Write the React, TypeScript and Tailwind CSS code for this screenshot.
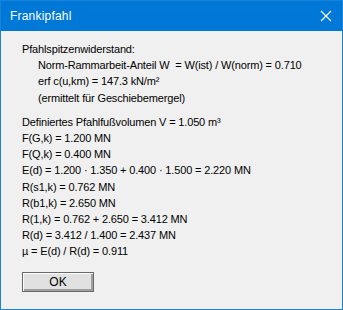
import React from 'react';

const lines: { text: string; indent?: boolean; gap?: boolean }[] = [
  { text: 'Pfahlspitzenwiderstand:' },
  { text: 'Norm-Rammarbeit-Anteil W\u00a0 = W(ist) / W(norm) = 0.710', indent: true },
  { text: 'erf c(u,km) = 147.3 kN/m²', indent: true },
  { text: '(ermittelt für Geschiebemergel)', indent: true },
  { text: 'Definiertes Pfahlfußvolumen V = 1.050 m³', gap: true },
  { text: 'F(G,k) = 1.200 MN' },
  { text: 'F(Q,k) = 0.400 MN' },
  { text: 'E(d) = 1.200 · 1.350 + 0.400 · 1.500 = 2.220 MN' },
  { text: 'R(s1,k) = 0.762 MN' },
  { text: 'R(b1,k) = 2.650 MN' },
  { text: 'R(1,k) = 0.762 + 2.650 = 3.412 MN' },
  { text: 'R(d) = 3.412 / 1.400 = 2.437 MN' },
  { text: 'µ = E(d) / R(d) = 0.911' },
];

export default function App() {
  return (
    <div className="w-[343px] h-[310px] flex flex-col border border-[#1883d7] bg-[#f0f0f0] font-['Liberation_Sans',Arial,sans-serif] overflow-hidden">
      {/* Title bar */}
      <div className="h-[30px] shrink-0 bg-[#0078d7] flex items-center justify-between pl-[9px] pr-[9px]">
        <span className="text-white text-[12px] tracking-[0.2px]">Frankipfahl</span>
        <svg width="12" height="12" viewBox="0 0 12 12" className="mr-[1px]">
          <path d="M1 1L11 11M11 1L1 11" stroke="white" strokeWidth="1.2" />
        </svg>
      </div>

      {/* Body */}
      <div className="flex-1 flex flex-col pl-[21px] pt-[10px] text-[11px] text-black">
        {lines.map((l, i) => (
          <div
            key={i}
            className={`h-[16.2px] leading-[16px] whitespace-nowrap tracking-[-0.15px] ${l.indent ? 'pl-[16px]' : ''} ${l.gap ? 'mt-[8px]' : ''}`}
          >
            {l.text}
          </div>
        ))}

        <button className="mt-[13px] w-[72px] h-[20px] border border-[#696969] bg-[#e1e1e1] shadow-[inset_1px_1px_0_#ffffff,inset_-2px_-2px_0_#a0a0a0] text-[12px] leading-none flex items-center justify-center">
          OK
        </button>
      </div>
    </div>
  );
}
